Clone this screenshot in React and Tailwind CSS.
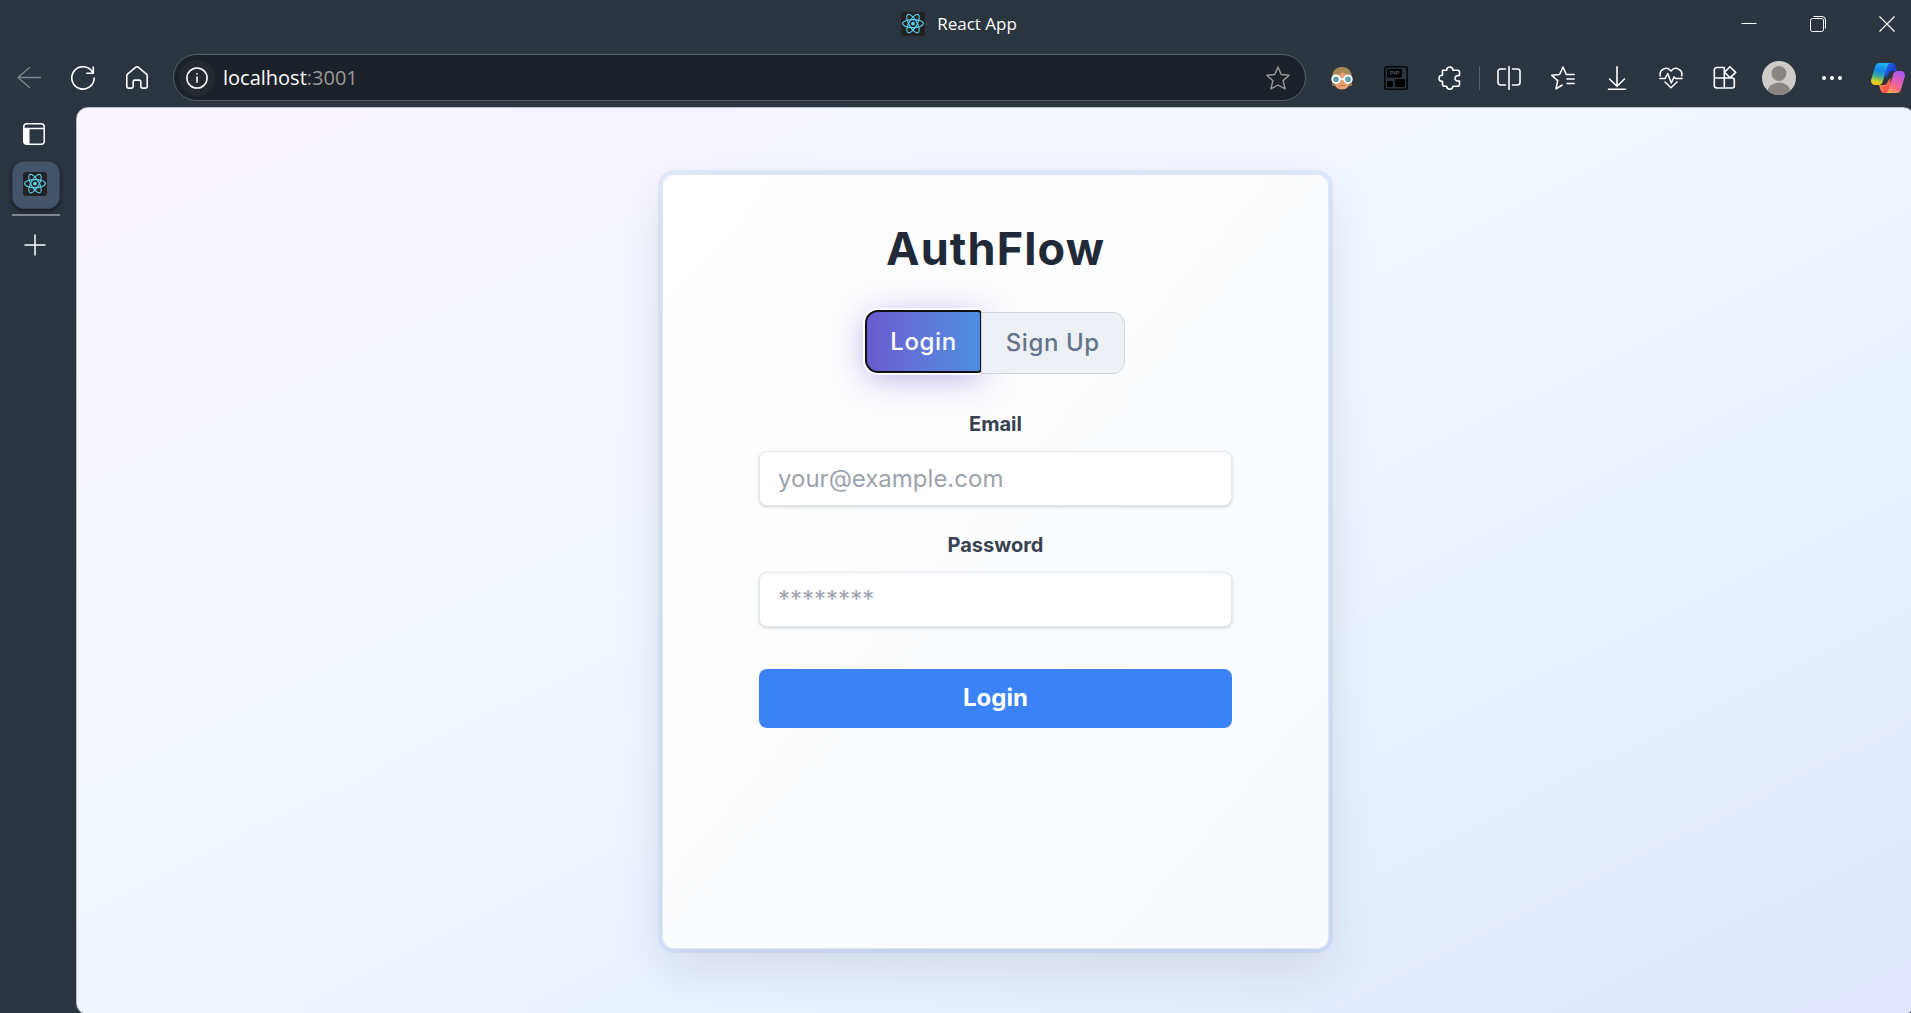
import React, { useState } from "react";

function Icon({ children, className = "h-6 w-6", width = 1.4 }) {
  return (
    <svg
      viewBox="0 0 24 24"
      className={className}
      fill="none"
      stroke="currentColor"
      strokeWidth={width}
      strokeLinecap="round"
      strokeLinejoin="round"
      aria-hidden="true"
    >
      {children}
    </svg>
  );
}

function ReactMark() {
  return (
    <svg viewBox="0 0 24 24" className="h-6 w-6" aria-hidden="true">
      <rect width="24" height="24" rx="3" fill="#222222" />
      <g fill="none" stroke="#5ccfee" strokeWidth="1.1">
        <ellipse cx="12" cy="11.6" rx="10.4" ry="4" />
        <ellipse cx="12" cy="11.6" rx="10.4" ry="4" transform="rotate(60 12 11.6)" />
        <ellipse cx="12" cy="11.6" rx="10.4" ry="4" transform="rotate(120 12 11.6)" />
      </g>
      <circle cx="12" cy="11.6" r="1.9" fill="#5ccfee" />
    </svg>
  );
}

function FaceIcon() {
  return (
    <svg viewBox="0 0 24 24" className="h-6 w-6" aria-hidden="true">
      <path d="M2 20V11C2 5 6.500 1 12 1s10 4 10 10v9h-3V9H5v11z" fill="#8f7645" />
      <path d="M4 9c3 0 6-1.500 8-4 2 2.500 5 4 8 4v6c0 5-3.500 8.500-8 8.500S4 20 4 15z" fill="#e9a274" />
      <path d="M2.500 10C3 4.500 7 1 12 1s9 3.500 9.500 9C18 10 14.500 8.500 13 5.500 11 8.500 7 10 2.500 10z" fill="#a38a57" />
      <g stroke="#ffffff" strokeWidth="1.800" fill="#5f9ea9">
        <circle cx="6" cy="13.300" r="3.800" />
        <circle cx="18" cy="13.300" r="3.800" />
        <path d="M9.800 12.800h4.400" />
      </g>
      <path d="M9.500 19.500h5" stroke="#c96f52" strokeWidth="1.200" strokeLinecap="round" />
    </svg>
  );
}

function PipIcon() {
  return (
    <svg viewBox="0 0 24 24" className="h-6 w-6" aria-hidden="true">
      <rect x="0.8" y="0.8" width="22.4" height="22.4" rx="2" fill="none" stroke="#05070a" strokeWidth="1.6" />
      <rect x="3" y="3" width="15" height="8.500" rx="1" fill="#000000" />
      <rect x="3" y="15" width="6" height="6" rx="1" fill="#000000" />
      <rect x="11" y="13" width="10" height="8" rx="1" fill="#000000" />
      <text x="10.500" y="9.400" fontSize="6" fontWeight="700" fontFamily="Liberation Sans, sans-serif" textAnchor="middle" fill="#4c5764">
        PiP
      </text>
    </svg>
  );
}

function AvatarIcon() {
  return (
    <svg viewBox="0 0 34 34" className="h-[34px] w-[34px]" aria-hidden="true">
      <defs>
        <clipPath id="avatar">
          <circle cx="17" cy="17" r="17" />
        </clipPath>
      </defs>
      <g clipPath="url(#avatar)">
        <rect width="34" height="34" fill="#cfccc9" />
        <circle cx="17" cy="12.500" r="7.500" fill="#8b8683" />
        <ellipse cx="17" cy="31" rx="11.500" ry="9.500" fill="#8b8683" />
      </g>
    </svg>
  );
}

function CopilotIcon() {
  return (
    <svg viewBox="0 0 34 30" className="h-[30px] w-[34px]" aria-hidden="true">
      <defs>
        <linearGradient id="cpLeft" x1="0.6" y1="0" x2="0.4" y2="1">
          <stop offset="0" stopColor="#22b5f2" />
          <stop offset="0.35" stopColor="#1585e6" />
          <stop offset="0.6" stopColor="#35a5a8" />
          <stop offset="0.85" stopColor="#c9d02c" />
          <stop offset="1" stopColor="#f7c61c" />
        </linearGradient>
        <linearGradient id="cpRight" x1="0.7" y1="0" x2="0.300" y2="1">
          <stop offset="0" stopColor="#a455f0" />
          <stop offset="0.4" stopColor="#dd5cb8" />
          <stop offset="0.75" stopColor="#fb6f80" />
          <stop offset="1" stopColor="#ffb04d" />
        </linearGradient>
        <linearGradient id="cpTop" x1="0" y1="0" x2="1" y2="1">
          <stop offset="0" stopColor="#1f6ff2" />
          <stop offset="0.6" stopColor="#1c3fd0" />
          <stop offset="1" stopColor="#2a63ea" />
        </linearGradient>
        <linearGradient id="cpBottom" x1="0" y1="0" x2="1" y2="1">
          <stop offset="0" stopColor="#ffa04a" />
          <stop offset="1" stopColor="#f0384f" />
        </linearGradient>
      </defs>
      <path d="M15 0h6c2 0 3 1 3.600 3.200L25.900 8h-4.500c-2.300 0-3.400 1.200-4 3.200l-3 4z" fill="url(#cpTop)" />
      <path d="M19 30h-6c-2 0-3-1-3.600-3.200L8.100 22h4.500c2.300 0 3.400-1.200 4-3.200l3-4z" fill="url(#cpBottom)" />
      <path d="M8.500 0H20c-2 0-3 1.400-3.600 3.400L11.800 18.500C11.100 20.700 9.800 22 7.600 22H4.200C.8 22-.6 19.500.3 16.200L4 3.600C4.700 1.300 6.200 0 8.500 0z" fill="url(#cpLeft)" />
      <path d="M25.500 30H14c2 0 3-1.400 3.600-3.400l4.600-15.100C22.900 9.300 24.200 8 26.400 8h3.400c3.400 0 4.800 2.500 3.900 5.800L30 26.400C29.300 28.700 27.800 30 25.500 30z" fill="url(#cpRight)" />
    </svg>
  );
}

function ToolButton({ label, children, className = "w-[54px]" }) {
  return (
    <button type="button" aria-label={label} className={`flex h-12 shrink-0 items-center justify-center ${className}`}>
      {children}
    </button>
  );
}

function TitleBar() {
  return (
    <header className="flex h-12 items-center pl-[7px] text-white">
      <div className="flex-1" />
      <div className="flex items-center gap-3">
        <ReactMark />
        <span className="text-[17px] leading-6">React App</span>
      </div>
      <div className="flex flex-1 justify-end gap-[21px]">
        <button type="button" aria-label="Minimize" className="flex h-12 w-12 items-center justify-center">
          <svg viewBox="0 0 16 16" className="h-4 w-4" aria-hidden="true">
            <path d="M0.500 7.500h15" stroke="currentColor" />
          </svg>
        </button>
        <button type="button" aria-label="Restore" className="flex h-12 w-12 items-center justify-center">
          <svg viewBox="0 0 16 16" className="h-4 w-4" fill="none" stroke="currentColor" aria-hidden="true">
            <rect x="0.500" y="2.500" width="13" height="13" rx="2" />
            <path d="M3.500 0.500h8.500a3.500 3.500 0 0 1 3.500 3.500v8.500" />
          </svg>
        </button>
        <button type="button" aria-label="Close" className="flex h-12 w-12 items-center justify-center">
          <svg viewBox="0 0 16 16" className="h-4 w-4" fill="none" stroke="currentColor" strokeWidth="1.200" aria-hidden="true">
            <path d="M0.500 0.500l15 15M15.500 0.500l-15 15" />
          </svg>
        </button>
      </div>
    </header>
  );
}

function ToolBar() {
  return (
    <div className="flex h-[59px] items-center pl-0.5 text-white">
      <ToolButton label="Back">
        <Icon className="h-6 w-6 text-[#7d858e]">
          <path d="M23.500 11.500H1M12.500 1.500l-11.500 10 11.500 10" />
        </Icon>
      </ToolButton>
      <ToolButton label="Reload">
        <Icon width={1.6}>
          <path d="M23.200 12A11.200 11.200 0 1 1 20.500 4.600L22 7M22.300 1v6.300h-6.500" />
        </Icon>
      </ToolButton>
      <ToolButton label="Home">
        <Icon width={1.6}>
          <path d="M1.800 9.600a2 2 0 0 1 .7-1.500l8-6.700a2.300 2.300 0 0 1 3 0l8 6.700a2 2 0 0 1 .7 1.500v11a1.500 1.500 0 0 1-1.500 1.500h-3.400a1.500 1.500 0 0 1-1.500-1.500v-5a1.500 1.500 0 0 0-1.500-1.500h-4.600a1.500 1.500 0 0 0-1.500 1.500v5a1.500 1.500 0 0 1-1.500 1.500H3.300a1.500 1.500 0 0 1-1.500-1.500z" />
        </Icon>
      </ToolButton>
      <div className="mr-[9px] ml-[9px] flex h-[47px] min-w-0 flex-1 items-center rounded-full border border-[#5a5f67] bg-[#1b2128] pr-[15px] pl-[5px]">
        <button type="button" aria-label="Site information" className="flex h-9 w-9 items-center justify-center rounded-full bg-[#23292f]">
          <Icon className="h-[22px] w-[22px]" width={1.7}>
            <circle cx="12" cy="12" r="11" />
            <path d="M12 11v5.500M12 7.300v.4" />
          </Icon>
        </button>
        <p className="ml-2 flex-1 truncate text-[20px] leading-7">
          localhost<span className="text-[#9a9a97]">:3001</span>
        </p>
        <button type="button" aria-label="Add to favorites" className="text-[#9a9a97]">
          <Icon>
            <path d="M12 .9l3.200 7.600 8 .8-6.100 5.300 2 8.300L12 19l-7.100 3.900 2-8.300L.8 9.300l8-.8z" />
          </Icon>
        </button>
      </div>
      <ToolButton label="Profile extension">
        <FaceIcon />
      </ToolButton>
      <ToolButton label="Picture in picture extension">
        <PipIcon />
      </ToolButton>
      <ToolButton label="Extensions">
        <Icon width={1.6}>
          <path d="M4.500 4.300h4.200c0-2 1.300-3.300 3.100-3.300s3.100 1.300 3.100 3.300h4.600a2 2 0 0 1 2 2v3.300c-2.600-.5-4.500.6-4.500 2.700s1.900 3.200 4.500 2.700v3.300a2 2 0 0 1-2 2h-4.600c0 1.700-1.300 2.900-3.100 2.900s-3.100-1.200-3.100-2.900H6.500a2 2 0 0 1-2-2v-2.900C2.300 15.400 1 14.100 1 12.300s1.300-3.100 3.500-3.100z" />
        </Icon>
      </ToolButton>
      <span className="mx-0.5 h-6 w-px bg-[#56606b]" />
      <ToolButton label="Split screen">
        <Icon width={1.6}>
          <path d="M8.500 3H3.500A2.500 2.500 0 0 0 1 5.500v11A2.500 2.500 0 0 0 3.500 19h5M15.500 3h5A2.500 2.500 0 0 1 23 5.500v11a2.500 2.500 0 0 1-2.500 2.500h-5M12 .5v23" />
        </Icon>
      </ToolButton>
      <ToolButton label="Favorites">
        <Icon width={1.6}>
          <path d="M18 8.500h-2.700L12 1 8.600 8.500.8 9.300l5.900 5.400-1.700 8L11 19.200M16 8.500h7.200M16 13h7.200M16 17.500h7.200" />
        </Icon>
      </ToolButton>
      <ToolButton label="Downloads">
        <Icon width={1.6}>
          <path d="M12 .8v19M4.500 13l7.500 7.300 7.500-7.300M3.500 23.200h17" />
        </Icon>
      </ToolButton>
      <ToolButton label="Browser essentials">
        <Icon width={1.5}>
          <path d="M1.300 9.800C-.2 4 7.500-.8 12 5c4.500-5.800 12.200-1 10.700 4.800M.8 12.500h5.400l2.500-5 3.600 9.500 2.700-6 1.700 1.500h6.500M6 16l6 5.800L18 16" />
        </Icon>
      </ToolButton>
      <ToolButton label="Apps">
        <Icon width={1.6}>
          <path d="M11.300 1.500H3.800a2.500 2.500 0 0 0-2.500 2.500v15.500A2.500 2.500 0 0 0 3.800 22h15.500a2 2 0 0 0 2-2v-6a2 2 0 0 0-2-2H1.300M11.300 1.500V22M17 .8l5.700 5.500L17 11.800l-5.500-5.500z" />
        </Icon>
      </ToolButton>
      <ToolButton label="Account" className="w-[53px]">
        <AvatarIcon />
      </ToolButton>
      <ToolButton label="Settings and more" className="w-[53px]">
        <svg viewBox="0 0 20 4" className="h-1 w-5" fill="currentColor" aria-hidden="true">
          <circle cx="2" cy="2" r="2" />
          <circle cx="10" cy="2" r="2" />
          <circle cx="18" cy="2" r="2" />
        </svg>
      </ToolButton>
      <ToolButton label="Copilot" className="ml-[7px] w-[46px]">
        <CopilotIcon />
      </ToolButton>
    </div>
  );
}

function SideBar() {
  return (
    <nav className="flex w-[76px] shrink-0 flex-col items-start pt-[15px] pl-3 text-white">
      <button type="button" aria-label="Tab actions" className="flex h-6 w-11 items-center justify-center">
        <svg viewBox="0 0 22 22" className="h-[22px] w-[22px]" aria-hidden="true">
          <rect x="0.800" y="0.800" width="20.400" height="20.400" rx="3" fill="none" stroke="currentColor" strokeWidth="1.500" />
          <path d="M1 5.500h20" stroke="currentColor" strokeWidth="1.500" />
          <path d="M1 5.500h5.500V21H3a2 2 0 0 1-2-2z" fill="currentColor" />
        </svg>
      </button>
      <button
        type="button"
        aria-label="React App"
        className="mt-[15px] flex h-12 w-12 items-center justify-center rounded-xl border border-[#364455] bg-[#44546a] pr-0.5 pb-0.5 shadow-[0_2px_5px_rgba(0,0,0,0.5)]"
      >
        <ReactMark />
      </button>
      <span className="mt-[5px] h-0.5 w-12 bg-[#7f868d]" />
      <button type="button" aria-label="New tab" className="mt-[17px] flex h-6 w-[46px] items-center justify-center">
        <svg viewBox="0 0 22 22" className="h-[22px] w-[22px]" fill="none" stroke="currentColor" strokeWidth="1.500" aria-hidden="true">
          <path d="M11 0.500v21M0.500 11h21" />
        </svg>
      </button>
    </nav>
  );
}

function Field({ id, label, type, placeholder }) {
  return (
    <div>
      <label htmlFor={id} className="mb-3 block text-center text-xl leading-[30px] font-bold text-[#374151]">
        {label}
      </label>
      <input
        id={id}
        type={type}
        placeholder={placeholder}
        className="block h-[55px] w-full rounded-lg border border-[#e2e8f0] bg-white px-[18px] text-2xl text-[#374151] shadow-[0_1px_4px_rgba(0,0,0,0.1),0_1px_2px_rgba(0,0,0,0.1)] placeholder:text-[#9ca3af]"
      />
    </div>
  );
}

function AuthCard() {
  const [mode, setMode] = useState("login");
  const action = mode === "login" ? "Login" : "Sign Up";
  const active =
    "-mt-px h-[61px] rounded-r-[3px] bg-linear-to-r from-[#6a5acd] to-[#4a90e2] pt-0.5 text-white shadow-[0_5px_32px_rgba(106,90,205,0.5)] outline-2 -outline-offset-1 outline-[#101010] ring-3 ring-white";
  const idle = "h-[62px] border border-[#d1d5db] bg-[#edf0f5] text-[#64748b]";
  return (
    <main className="min-h-[775px] w-[667px] rounded-xl border border-[#e2e8f0] bg-linear-to-br from-white to-[#f8fafc] px-24 pt-11 font-[Inter,sans-serif] shadow-[0_0_0_4px_rgba(59,130,246,0.1),0_19px_50px_rgba(0,0,0,0.1)]">
      <h1 className="text-center text-[45px] leading-[60px] font-bold tracking-wide text-[#1f2937]">AuthFlow</h1>
      <div className="mt-[33px] flex justify-center">
        <button
          type="button"
          onClick={() => setMode("login")}
          className={`rounded-l-xl px-6 text-2xl font-medium tracking-wide ${mode === "login" ? active : idle}`}
        >
          Login
        </button>
        <button
          type="button"
          onClick={() => setMode("signup")}
          className={`rounded-r-xl px-6 text-2xl font-medium tracking-wide ${mode === "signup" ? active : idle}`}
        >
          Sign Up
        </button>
      </div>
      <form className="mt-[35px]" onSubmit={(e) => e.preventDefault()}>
        <div className="flex flex-col gap-6">
          <Field id="email" label="Email" type="email" placeholder="your@example.com" />
          <Field id="password" label="Password" type="password" placeholder="********" />
        </div>
        <button type="submit" className="mt-[42px] h-[59px] w-full rounded-lg bg-[#3b82f6] text-2xl font-bold text-white">
          {action}
        </button>
      </form>
    </main>
  );
}

export default function App() {
  return (
    <div className="flex h-screen flex-col overflow-hidden bg-[#2b3540] font-['Open_Sans','Noto_Sans',sans-serif]">
      <TitleBar />
      <ToolBar />
      <div className="-mr-1 -mb-0.5 flex min-h-0 flex-1">
        <SideBar />
        <div className="flex flex-1 items-center justify-center rounded-xl border border-[#b9bcc9] bg-linear-to-br from-[#faf5ff] via-[#eff6ff] to-[#e0e7ff]">
          <AuthCard />
        </div>
      </div>
    </div>
  );
}
